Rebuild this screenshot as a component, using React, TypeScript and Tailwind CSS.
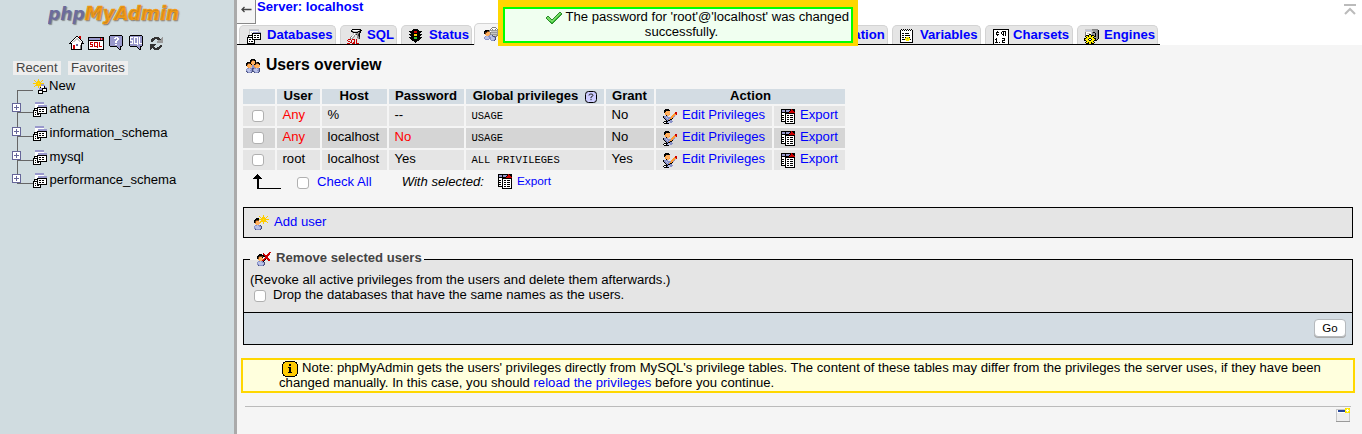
import React from 'react';

const palette: Record<string, string> = {
  k: '#000000', w: '#ffffff', p: '#9999cc', d: '#666699', g: '#808080', l: '#c8c8c8', r: '#cc0000',
  y: '#ffcc00', Y: '#fff000', o: '#ff9933', b: '#8a92c8', B: '#454d7c', n: '#6b3e1e', s: '#ffb060',
  G: '#33bb33', D: '#333333', m: '#9a9a9a', c: '#b9c1e6', t: '#2a8a2a', L: '#77dd66', N: '#26469a', e: '#eeeeee',
};

function Px({ rows, className = '' }: { rows: string[]; className?: string }) {
  const w = Math.max(...rows.map((r) => r.length));
  return (
    <svg width={w} height={rows.length} shapeRendering="crispEdges" className={`block shrink-0 ${className}`}>
      {rows.flatMap((row, y) =>
        row.split('').map((ch, x) =>
          palette[ch] ? <rect key={`${x}-${y}`} x={x} y={y} width="1" height="1" fill={palette[ch]} /> : null,
        ),
      )}
    </svg>
  );
}

const dbIcon = [
  '..ppppppppp',
  '..ppppppppp',
  '..wwwwwwwww',
  '..wwwppppppppp',
  '..wwwppppppppp',
  '..wwkkkkkkkkkk',
  '.kkkkwwwwwwwwk',
  '.kwwkwkkwkkwwk',
  'kkkkkwwwwwwwwk',
  'kwwwkwkkwkkwwk',
  'kwkwkwwwwwwwwk',
  'kwwwkkkkkkkkkk',
  'kwkwkkwk',
  'kwwwwwwk',
  'kkkkkkkk',
];
const dbTabIcon = [
  '..llllllllll',
  '..lccccccccl',
  '..lwwwwwwwwl',
  '..lwlwpppppppp',
  '..lwwkkkkkkkkk',
  '..lwlkwwwwwwwk',
  '.kkkkkwkkwkkwk',
  '.kwwwkwwwwwwwk',
  'kkkkkkwkkwkkwk',
  'kwwwwkwwwwwwwk',
  'kwkkwkkkkkkkkk',
  'kwwwwwwk',
  'kwkwkkwk',
  'kwwwwwwk',
  'kkkkkkkk',
];
const newIcon = [
  '.....y',
  '.y...y...y',
  '..y.yyy.y',
  '...yyyyy',
  'yyyyyYyyyyy',
  '...yyyyyppp',
  '..yyyyyypppp',
  '.y...y.ywwwk',
  '.....y.kwwwkpp',
  '......pppkkkkk',
  '......pppkwwwk',
  '.....kkkkkwwwk',
  '.....kwwwkkkkk',
  '.....kwwwk',
  '.....kkkkk',
];
const homeIcon = [
  '.......kk.rr',
  '......kwwkrr',
  '.....kwllwkr',
  '....kwllllwk',
  '...kwllwwllwk',
  '..kwllwwwwllwk',
  '.kwlwwwwwwwwlk',
  'kkkwwwwwwwwwkkk',
  '..kwwwwddwwwk',
  '..kwrrwddwwgk',
  '..kwrrwwwwwgk',
  '..kwrrwwwwwgk',
  '..kwrrwwwwwgk',
  '..kkkkkkkkkkk',
];
const sqlWindowIcon = [
  'kkkkkkkkkkkkkkkk',
  'kppppppppppprprk',
  'kppppppppppprprk',
  'kkkkkkkkkkkkkkkk',
  'kwwwwwwwwwwwwwwk',
  'kwrrrwrrrrwrwwwk',
  'kwrwwwrwwrwrwwwk',
  'kwrrrwrwwrwrwwwk',
  'kwwwrwrwwrwrwwwk',
  'kwrrrwrrrrwrrrwk',
  'kwwwwwwwwrwwwwwk',
  'kwwwwwwwwwwwwwwk',
  'kkkkkkkkkkkkkkkk',
];
const helpBubble = [
  '.kkkkkkkkkkkk',
  'kppppppppppppk',
  'kpppppwwwppppk',
  'kppppwwpwwpppk',
  'kpppppppwwpppk',
  'kppppppwwppppk',
  'kpppppwwpppppk',
  'kpppppwwpppppk',
  'kppppppppppppk',
  'kpppppwwpppppk',
  'kppppppppppppk',
  '.kkkkkkkpppkk',
  '........kppk',
  '.........kpk',
  '..........kk',
];
const sqlBubble = [
  '.kkkkkkkkkkkk',
  'kppppppppppppk',
  'kwwwpwwwwpwppk',
  'kwpppwppwpwppk',
  'kwpppwppwpwppk',
  'kwwwpwppwpwppk',
  'kppwpwppwpwppk',
  'kppwpwppwpwppk',
  'kwwwpwwwwpwwwk',
  'kpppppppwppppk',
  'kppppppppppppk',
  '.kkkkkkkpppkk',
  '........kppk',
  '.........kpk',
  '..........kk',
];
const refreshIcon = [
  '....DDDDD...m',
  '..DDDDDDDD.mm',
  '.DDDD..DDDDmm',
  '.DDD....mmmmm',
  '.DD....mmmmmm',
  '.......mmmmmm',
  '.',
  'DDDDDD.......',
  'DDDDD.....DD.',
  'DDDD.....DDD.',
  'DDDDD..DDDD..',
  'DD.DDDDDDD...',
  'D...DDDDD....',
];
const plusIcon = [
  'ddddddddd', 'dwwwwwwwd', 'dwwwdwwwd', 'dwwwdwwwd', 'dwdddddwd', 'dwwwdwwwd', 'dwwwdwwwd', 'dwwwwwwwd', 'ddddddddd',
];
const sqlTabIcon = [
  '.....kkkkkkkkk',
  '....klwwwwwwmkk',
  '....kkmlllmkkk',
  '.....gkkkkkmDk',
  '......lwlmmgk',
  '......lwmDmDk',
  '.....lwm..mDk',
  '....gwlm..mgk',
  '...gwlm...gmD',
  '...glm....lmD',
  '.rrr.rrr.r..',
  'r...r..r.r..',
  '.rr.r..r.r..',
  '...rr.rr.r..',
  'rrr..rrr.rrr',
];
const trafficIcon = [
  '....kkkkk',
  '...kkkkkkk',
  'kkkkkrrrkkkkk',
  '.kkkkrrrkkkk',
  '..kkkkkkkkk',
  'kkkkkyyykkkkk',
  '.kkkkyyykkkk',
  '..kkkkkkkkk',
  'kkkkkGGGkkkkk',
  '.kkkkGGGkkkk',
  '..kkkkkkkkk',
  '...kkkkkkk',
  '.....kkk',
  '......k',
];
const keysIcon = [
  '........gggg',
  '.......gwwwwg',
  '......gwg..gwg',
  '.kkkkgmmmmmmmmg',
  'kkknngwllllllmg',
  'knnossgmmmmmmmg',
  'knssssgllllllmg',
  '.ossssgmmmmmmmg',
  '..sssbccBlllmg',
  '.bccbbccbBBgg',
  'bccccbbcccbB',
  'bccccbbccccB',
  '.bbbb.bcccbB',
  '.......bbbB',
];
const usersIcon = [
  '.....kkkk',
  '....kknnkk',
  '....knsssk',
  '.kkkkosssknkk',
  'kknnkosssknnkk',
  'knssskssknsssk',
  'kossssbbosssss',
  '.ossssbbosssss',
  '..osscbbbosss',
  '.bbcbbBBbbcbbB',
  'bccccbBbccccbB',
  'bcccbbBbcccbbB',
  'BbcccbBBbcccbB',
  '.BbbbB..BbbbB',
];
const varsIcon = [
  '.k.k.k.k.k.k',
  'kwkwkwkwkwkwk',
  'kwwwwwwwwwwwk',
  'kwwwwwwwwwwwk',
  'kwkkwkkkkwwwk',
  'kwwwwwwwwwwwk',
  'kwkkwkkkkkwwk',
  'kwwwwwwwwwwwk',
  'kwkkwkYYYkwwk',
  'kwwwwYYgYYwwk',
  'kwkkkYYYYYkwk',
  'kwwwwwYYYwwwk',
  'kwwwwwwwwwwwk',
  'kkkkkkkkkkkkk',
];
const charsetIcon = [
  'kkkkkkkkkkkkkkkk',
  'kwwwwwwwwwwwwwwk',
  'kwwwkwwwwkkkkwwk',
  'kwwkkkwwkwkwkwwk',
  'kwwkwwwwkwkwkwwk',
  'kwwkkkwwwkkwkwwk',
  'kwwwkwwwwwkwkwwk',
  'kwwwwwwwwwwwwwwk',
  'kwwwwwwwwwwwwwwk',
  'kwwkwwwwwkkkwwwk',
  'kwkkwwwwwwwkwwwk',
  'kwwkwwwwwkkkwwwk',
  'kwwkwwwwwkwwwwwk',
  'kwkkkwkwwkkkwwwk',
  'kwwwwwwwwwwwwwwk',
  'kkkkkkkkkkkkkkkk',
];
const engineIcon = [
  '.lllllllgggggg',
  '.lccccclmmmmmgk',
  '.llllllllmmmmgk',
  '.gwwwwwlgkkmmgk',
  '.gwlllwlgmmkmgk',
  '.gwwwkklgmmkmgk',
  '.gkkkYYkkkmkmgk',
  '.kYYkYYkYYkkmgk',
  '..kYYYYYYkmmmgk',
  'kkYYYkkYYYkkmgk',
  'kYYYkwwkYYYkmk',
  'kkYYYkkYYYkkk',
  '..kYYYYYYk',
  '.kYYkYYkYYk',
  '..kkkYYkkk',
  '....kkkk',
];
const editIcon = [
  '..kkkk',
  '.kkkkkk',
  '.kkssss',
  '.kossss.....rr',
  '..ossss....orr',
  '..ossso...ooor',
  '...kss...oooc',
  'kbbbb...ooob',
  'kbbcbbbboob',
  '.kbbcbbook',
  '..kbbbokk',
  '...kbkkbb',
  '.kkkkccbbb',
  'kwwkbccbb',
  '.kkkkk',
];
const exportIcon = [
  'kkkkkkkkkkrkkk',
  'kpppkppppkrrkk',
  'kpppkpppkrrrrk',
  'kkkkkkkkrrrrrr',
  'kwwwkkkkkkkkkk',
  'kwwwkwwwwwwwwk',
  'kkkwkwkkwkkkwk',
  'kwwwkwwwwwwwwk',
  'kkkwkwkkwkkkwk',
  'kwwwkwwwwwwwwk',
  'kkkwkwkkwkkkwk',
  'kwwwkwwwwwwwwk',
  'kkkkkwkkwkkkwk',
  '....kwwwwwwwwk',
  '....kkkkkkkkkk',
];
const addUserIcon = [
  '.........y',
  '.....y...y...y',
  '......y.yyy.y',
  '..kkk..yyyyy',
  '.kkkkyyyyYyyyyy',
  'kknnn..yyyyy',
  'knoss.yyyyyyy',
  'knssssy..y...y',
  '.ossss...y',
  '..sss',
  '.bbcbbB',
  'bccccbbB',
  'bccccccB',
  'bbccccbB',
  '.BbbbbB',
];
const delUserIcon = [
  '............rr',
  '......r....rr',
  '..kkk.rr..rrr',
  '.kkkkkkrrrrr',
  'kknnnnkkrrr',
  'knossk..rrr',
  'knssss.rrrrr',
  '.ossssrrk.rrr',
  '..sssrrk...rr',
  '.bbcbbk',
  'bccccbbB',
  'bccccccB',
  'bbccccbB',
  '.BbbbbB',
];
const tickIcon = [
  '.............tt',
  '............tLLt',
  '...........tLLGt',
  '..........tLLGt',
  '.tt......tLLGt',
  'tLLt....tLLGt',
  'tLLLt..tLLGt',
  '.tLLLttLLGt',
  '..tLLLLLGt',
  '...tGLLGt',
  '....tGGt',
  '.....tt',
];
const infoIcon = [
  '...kkkkkkkkkk',
  '.kkyyyyyyyyyykk',
  '.kyyyyyyyyyyyyk',
  'kyyyyyykkyyyyyyk',
  'kyyyyyykkyyyyyyk',
  'kyyyyyyyyyyyyyyk',
  'kyyyyykkkyyyyyyk',
  'kyyyyyykkyyyyyyk',
  'kyyyyyykkyyyyyyk',
  'kyyyyyykkyyyyyyk',
  'kyyyyyykkyyyyyyk',
  'kyyyyykkkkyyyyyk',
  'kyyyyyyyyyyyyyyk',
  '.kyyyyyyyyyyyyk',
  '.kkyyyyyyyyyykk',
  '...kkkkkkkkkk',
];
const windowIcon = [
  '.........yYYYy',
  'lllllllllYYwYY',
  'lwNNNNNNNYwwwY',
  'lwNNNNNNNYYwYY',
  'lwwwwwwwwyYYYy',
  'leeeeeeeeeeeel',
  'leeeeeeeeeeeel',
  'leeeeeeeeeeeel',
  'leeeeeeeeeeeel',
  'leeeeeeeeeeeel',
  'leeeeeeeeeeeel',
  'leeeeeeeeeeeel',
  'leeeeeeeeeeeel',
  'mmmmmmmmmmmmmm',
];

function Check({ className = '' }: { className?: string }) {
  return (
    <input
      type="checkbox"
      className={`block size-3 shrink-0 appearance-none rounded-[3px] border border-[#b0b0b0] bg-white ${className}`}
    />
  );
}

function Tab({ icon, label, className }: { icon: string[]; label: string; className: string }) {
  return (
    <a
      className={`flex h-[19px] shrink-0 items-start rounded-t-[5px] border border-b-0 border-[#d3d3d3] bg-[#e5e5e5] font-bold text-[#0000ff] ${className}`}
    >
      <span className="flex w-5 shrink-0 pt-[3px]">
        <Px rows={icon} />
      </span>
      <span className="pt-px whitespace-nowrap">{label}</span>
    </a>
  );
}

function TreeRow({ label, className }: { label: string; className: string }) {
  return (
    <div className={`flex items-start ${className}`}>
      <Px rows={plusIcon} className="mt-px" />
      <span className="mt-[10px] -ml-1 h-px w-4 bg-[#666]" />
      <Px rows={dbIcon} />
      <span className="-mt-px ml-[2.5px]">{label}</span>
    </div>
  );
}

const users = [
  { user: 'Any', host: '%', pass: '--', priv: 'USAGE', grant: 'No' },
  { user: 'Any', host: 'localhost', pass: 'No', priv: 'USAGE', grant: 'No' },
  { user: 'root', host: 'localhost', pass: 'Yes', priv: 'ALL PRIVILEGES', grant: 'Yes' },
];

function UserRow({ u, odd }: { u: (typeof users)[number]; odd: boolean }) {
  const cell = `h-5 pt-px whitespace-nowrap ${odd ? 'bg-[#d5d5d5]' : 'bg-[#e5e5e5]'}`;
  return (
    <>
      <div className={cell}>
        <Check className="mt-[3px] ml-[9px]" />
      </div>
      <div className={`${cell} pl-[5.5px] ${u.user === 'Any' ? 'text-[#ff0000]' : ''}`}>{u.user}</div>
      <div className={`${cell} pl-[5.5px]`}>{u.host}</div>
      <div className={`${cell} pl-[5.5px] ${u.pass === 'No' ? 'text-[#ff0000]' : ''}`}>{u.pass}</div>
      <div className={`${cell} pl-[5.5px]`}>
        <code className="block pt-[2px] font-['Liberation_Mono',monospace] text-[10.5px] leading-[15px]">{u.priv}</code>
      </div>
      <div className={`${cell} pl-[5.5px]`}>{u.grant}</div>
      <a className={`${cell} flex pl-[7px] text-[#0000ff]`}>
        <Px rows={editIcon} className="mt-[2px]" />
        <span className="ml-[5px]">Edit Privileges</span>
      </a>
      <a className={`${cell} flex pl-[7px] text-[#0000ff]`}>
        <Px rows={exportIcon} className="mt-[2px]" />
        <span className="ml-[5px]">Export</span>
      </a>
    </>
  );
}

export default function App() {
  const th = 'h-[15px] bg-[#d3dce3] text-center font-bold leading-[13px] whitespace-nowrap';
  return (
    <div className="relative flex h-[434px] w-[1362px] overflow-hidden bg-[#f5f5f5] font-['Liberation_Sans',Arial,sans-serif] text-[13.12px] leading-[15px] text-black">
      <aside className="flex w-[234px] shrink-0 flex-col bg-[#d0dce0]">
        <svg
          width="134"
          height="28"
          className="ml-12 block shrink-0 [text-shadow:1px_1px_1px_#55555599]"
          fontFamily="'DejaVu Sans', sans-serif"
          fontStyle="italic"
          fontWeight="bold"
        >
          <text y="20" textLength="131" lengthAdjust="spacingAndGlyphs" fontSize="19">
            <tspan fill="#6c6c9c" fontSize="18">php</tspan>
            <tspan fill="#f89c0e" stroke="#f89c0e" strokeWidth=".6">MyAdmin</tspan>
          </text>
        </svg>
        <div className="mt-2 ml-[69px] flex h-[15px] items-start">
          <Px rows={homeIcon} />
          <Px rows={sqlWindowIcon} className="mt-px ml-1" />
          <Px rows={helpBubble} className="-mt-px ml-[5px]" />
          <Px rows={sqlBubble} className="-mt-px ml-[6px]" />
          <Px rows={refreshIcon} className="mt-px ml-[7px]" />
        </div>
        <div className="mt-[10px] ml-[13px] flex gap-[7px] text-[#444]">
          <span className="h-[14px] w-12 bg-[#eee] pl-[3px] leading-[14px]">Recent</span>
          <span className="h-[14px] w-[60px] bg-[#eee] pl-[3px] leading-[14px]">Favorites</span>
        </div>
        <div className="ml-3 flex h-[23px] items-start pt-1">
          <span className="mt-[11px] ml-[5px] h-[14px] w-4 border-t border-l border-[#666]" />
          <Px rows={newIcon} />
          <span className="-mt-px ml-[2px]">New</span>
        </div>
        <div className="ml-3 bg-[linear-gradient(#666,#666)] bg-[length:1px_83px] bg-[position:5px_0] bg-no-repeat pt-1">
          <TreeRow label="athena" className="h-6" />
          <TreeRow label="information_schema" className="h-6" />
          <TreeRow label="mysql" className="h-[23px]" />
          <TreeRow label="performance_schema" className="h-6" />
        </div>
      </aside>
      <div className="w-[3px] shrink-0 bg-[#aaa]" />
      <main className="flex min-w-0 flex-1 flex-col">
        <header className="h-[45px] shrink-0 bg-white">
          <div className="flex h-[23px] items-start">
            <div className="flex h-6 w-[19px] shrink-0 items-center justify-center border-r border-b border-[#888] bg-[#f4f4f4] pb-1">
              <svg width="11" height="7" className="block" fill="none" stroke="#444" strokeWidth="1.3">
                <path d="M10.500 3.500H1M3.500 1L1 3.500l2.500 2.500" />
              </svg>
            </div>
            <a className="-mt-px ml-px font-bold text-[#0000ff]">Server: localhost</a>
            <svg width="12" height="11" className="mt-[4px] mr-[6px] ml-auto block" fill="none" stroke="#bbb" strokeWidth="2">
              <path d="M0 1h12M1 10l5-5 5 5" />
            </svg>
          </div>
          <nav className="flex h-[22px] items-end">
            <div className="flex w-[237px] shrink-0 border-b border-black pl-[2px]">
              <Tab icon={dbTabIcon} label="Databases" className="w-[97px] pl-[7px]" />
              <Tab icon={sqlTabIcon} label="SQL" className="ml-1 w-[57px] pl-[6px]" />
              <Tab icon={trafficIcon} label="Status" className="ml-1 w-[71px] pl-[7px]" />
            </div>
            <a className="flex h-[22px] w-[66px] shrink-0 rounded-t-[5px] border border-b-0 border-[#d3d3d3] bg-[#f5f5f5] pt-[3px] pl-[9px]">
              <Px rows={keysIcon} />
            </a>
            <div className="flex w-[620px] shrink-0 border-b border-black pl-[245px]">
              <Tab icon={dbTabIcon} label="Replication" className="w-[103px] pl-[8px]" />
              <Tab icon={varsIcon} label="Variables" className="ml-1 w-[89px] pl-[7px]" />
              <Tab icon={charsetIcon} label="Charsets" className="ml-1 w-[88px] pl-[7px]" />
              <Tab icon={engineIcon} label="Engines" className="ml-1 w-[81px] pl-[6px]" />
            </div>
          </nav>
        </header>

        <h2 className="flex h-11 shrink-0 items-start pl-[9px] text-[15.74px] leading-[18px] font-bold">
          <Px rows={usersIcon} className="mt-[14px]" />
          <span className="mt-[11px] ml-[6px]">Users overview</span>
        </h2>

        <div className="ml-[6px] grid shrink-0 grid-cols-[32px_43px_65px_75px_138px_48px_116px_71px] gap-[2px]">
          <div className={th} />
          <div className={`${th} pr-px`}>User</div>
          <div className={`${th} pr-px`}>Host</div>
          <div className={`${th} pr-px`}>Password</div>
          <div className={`${th} flex justify-center gap-[7px]`}>
            Global privileges
            <svg width="12" height="12" className="mt-[2px] block">
              <rect x=".5" y=".5" width="11" height="11" rx="3" fill="#ccccff" stroke="#000" />
              <path d="M4 4.500V4q0-1 2-1t2 1.200T6 6v1.200M6 8v1.200" fill="none" stroke="#222" />
            </svg>
          </div>
          <div className={`${th} pr-px`}>Grant</div>
          <div className={`${th} col-span-2`}>Action</div>
          {users.map((u, i) => (
            <UserRow key={i} u={u} odd={i === 1} />
          ))}
        </div>

        <div className="flex h-[37px] shrink-0 items-start pt-1 pl-4">
          <svg width="28" height="15" className="block" shapeRendering="crispEdges">
            <path d="M4 0h1v1h1v1h1v1h1v1h1v1H6v9h22v1H4V5H0V4h1V3h1V2h1V1h1z" />
          </svg>
          <Check className="mt-[3px] ml-4" />
          <span className="ml-2 text-[#0000ff]">Check All</span>
          <em className="ml-[30px]">With selected:</em>
          <Px rows={exportIcon} className="ml-[14px]" />
          <span className="ml-[5px] text-[11.8px] text-[#0000ff]">Export</span>
        </div>

        <section className="mr-[9px] ml-[6px] flex h-[31px] shrink-0 items-start border border-black bg-[#e5e5e5] pt-[6px] pl-[10px]">
          <Px rows={addUserIcon} className="mt-px" />
          <a className="ml-[5px] text-[#0000ff]">Add user</a>
        </section>

        <section className="mt-[21px] mr-[9px] ml-[6px] flex h-[86px] shrink-0 flex-col border border-black bg-[#e5e5e5]">
          <div className="-mt-[9px] ml-[6px] flex h-[17px] w-[174px] items-start bg-[linear-gradient(#f5f5f5_9px,#e5e5e5_9px)] pl-[7px] font-bold text-[#444]">
            <Px rows={delUserIcon} className="mt-px" />
            <span className="-mt-px ml-[5px]">Remove selected users</span>
          </div>
          <div className="mt-1 ml-[6px]">(Revoke all active privileges from the users and delete them afterwards.)</div>
          <label className="ml-[10px] flex items-start">
            <Check className="mt-[3px]" />
            <span className="ml-[7px]">Drop the databases that have the same names as the users.</span>
          </label>
          <div className="mt-auto flex h-8 shrink-0 justify-end border-t border-black bg-[#d3dce3] pt-[6px] pr-[6px]">
            <button className="flex h-[18px] w-8 items-center justify-center rounded-[4px] border border-[#b5b9bd] bg-white pt-[2px] text-[11.5px] leading-none shadow-[0_1px_0_#aaa]">
              Go
            </button>
          </div>
        </section>

        <div className="mt-[13px] mr-[7px] ml-1 h-[35px] shrink-0 border-2 border-[#ffd700] bg-[#ffffdd] pl-[35px]">
          <div className="flex h-[15px] items-start whitespace-nowrap">
            <Px rows={infoIcon} className="mt-px ml-1" />
            <span className="ml-1">
              Note: phpMyAdmin gets the users' privileges directly from MySQL's privilege tables. The content of these tables
              may differ from the privileges the server uses, if they have been
            </span>
          </div>
          <div className="relative pl-px tracking-[0.025px]">
            changed manually. In this case, you should <a className="text-[#0000ff]">reload the privileges</a> before you
            continue.
          </div>
        </div>

        <footer className="mt-[13px] mr-[11px] ml-2 flex shrink-0 justify-end border-t border-[#bbb]">
          <Px rows={windowIcon} className="mt-px mr-px" />
        </footer>
      </main>

      <div className="absolute top-0 left-[498px] h-[46px] w-[360px] bg-[#ffd700] px-[5px] pt-[7px]">
        <div className="h-9 border-2 border-[#00ff00] bg-[#f0fff0]">
          <div className="flex h-[15px] items-start justify-end pr-[2px] whitespace-nowrap">
            <Px rows={tickIcon} className="mt-[3px]" />
            <span className="ml-1">The password for 'root'@'localhost' was changed</span>
          </div>
          <div className="pl-[7px] text-center">successfully.</div>
        </div>
      </div>
    </div>
  );
}
